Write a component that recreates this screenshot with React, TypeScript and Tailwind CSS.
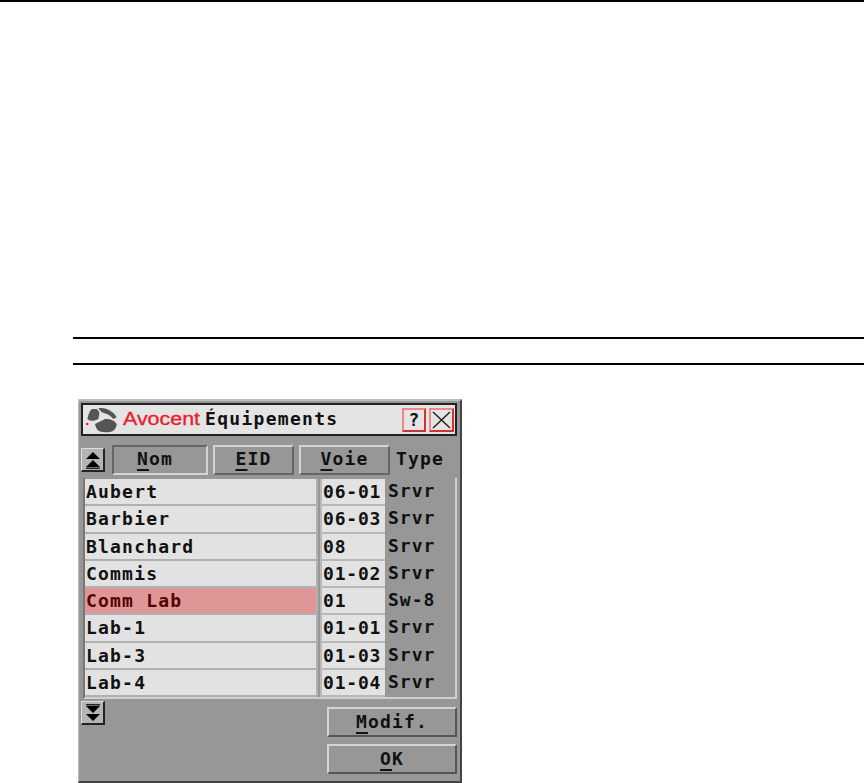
const mono = "font-['DejaVu_Sans_Mono','Liberation_Mono',monospace] font-bold";

const rows = [
  { name: 'Aubert', eid: '06-01', type: 'Srvr' },
  { name: 'Barbier', eid: '06-03', type: 'Srvr' },
  { name: 'Blanchard', eid: '08', type: 'Srvr' },
  { name: 'Commis', eid: '01-02', type: 'Srvr' },
  { name: 'Comm Lab', eid: '01', type: 'Sw-8', selected: true },
  { name: 'Lab-1', eid: '01-01', type: 'Srvr' },
  { name: 'Lab-3', eid: '01-03', type: 'Srvr' },
  { name: 'Lab-4', eid: '01-04', type: 'Srvr' },
];

function Logo() {
  return (
    <svg width="34" height="26" viewBox="0 0 34 26" className="shrink-0">
      <path d="M1.5 12 C2 8 4 3 6 2 L10.5 2 C12.5 3 13.5 5 13.3 7 L12.3 12 C10 13.5 7 13.8 5.7 13.7 C4 13.6 2.5 13 1.5 12 Z" fill="#555" />
      <path d="M12.3 1.3 C15 0.8 18 1 20.7 2 C25 3.5 29 7 30.7 10.3 L27.3 12 C25.5 9.5 23 8 20.7 7 L15.7 5.3 Z" fill="#555" />
      <path d="M9 17 L19 12 C22 12 24 12.3 25.7 13 C28 14 30 15.5 30.7 17 C30.5 20 29 22.5 27.3 23.7 C25 25 22 25.5 19 25.3 C16 25 14 24.5 12.3 23.7 C10.5 22 9.5 19.5 9 17 Z" fill="#555" />
      <circle cx="1.2" cy="17" r="1.3" fill="#e0202c" />
    </svg>
  );
}

function ArrowButton({ down }: { down?: boolean }) {
  return (
    <button className="w-6 h-6 bg-[#b4b4b4] border-t border-l border-[#dcdcdc] border-r-2 border-b-2 border-r-[#222] border-b-[#222] flex items-center justify-center">
      <svg width="16" height="18" viewBox="0 0 16 18" className={down ? 'rotate-180' : ''}>
        <path d="M8 1 L15 8 H1 Z M8 9 L15 16 H1 Z" fill="#000" />
        <path d="M1 17.2 H15" stroke="#000" strokeWidth="1.2" />
      </svg>
    </button>
  );
}

function Hotkey({ label }: { label: string }) {
  return (
    <>
      <span className="underline decoration-2 underline-offset-[4px] [text-decoration-skip-ink:none]">{label[0]}</span>
      {label.slice(1)}
    </>
  );
}

function ColumnButton({ label, width, pressed, shift }: { label: string; width: string; pressed?: boolean; shift?: string }) {
  return (
    <button
      className={`${width} ${shift ?? ''} h-[30px] flex items-center justify-center pb-[3px] text-[18px] tracking-[1.2px] text-[#111] border-2 ${
        pressed
          ? 'border-t-[#666] border-l-[#666] border-r-[#d4d4d4] border-b-[#d4d4d4]'
          : 'border-t-[#d4d4d4] border-l-[#d4d4d4] border-r-[#666] border-b-[#666]'
      }`}
    >
      <span>
        <Hotkey label={label} />
      </span>
    </button>
  );
}

function ActionButton({ label }: { label: string }) {
  return (
    <button className="w-[130px] h-[30px] flex items-center justify-center pb-[2px] text-[18px] tracking-[1.2px] text-[#111] border-2 border-t-[#d4d4d4] border-l-[#d4d4d4] border-r-[#555] border-b-[#555]">
      <span>
        <Hotkey label={label} />
      </span>
    </button>
  );
}

function Dialog() {
  return (
    <div className={`${mono} w-[384px] h-[384px] ml-[5px] mt-[34px] bg-[#979797] border-t-2 border-l border-[#bdbdbd] border-r-2 border-b-2 border-r-[#444] border-b-[#444] px-[2px] pt-[2px]`}>
      <div className="h-[33px] mr-[1px] bg-[#e4e4e4] border-2 border-[#222] flex items-center pl-[3px] pr-[1px]">
        <Logo />
        <span className="font-['Liberation_Sans',sans-serif] font-normal w-[79px] ml-[3px] text-[#e8202c] text-[18px] origin-left scale-x-[1.19] [-webkit-text-stroke:0.3px_#e8202c] whitespace-nowrap">Avocent</span>
        <span className="text-[18px] tracking-[1.3px] text-[#111] ml-[3px] pb-[2px]">Équipements</span>
        <div className="ml-auto flex items-center gap-[3px]">
          <span className="w-[24px] h-[24px] border-2 border-t-[#e88] border-l-[#e88] border-r-[#c33] border-b-[#c33] flex items-center justify-center text-[18px] text-[#111]">?</span>
          <span className="w-[25px] h-[24px] border-2 border-t-[#e88] border-l-[#e88] border-r-[#c33] border-b-[#c33] flex items-center justify-center">
            <svg width="19" height="18" viewBox="0 0 19 18">
              <path d="M1 1 L18 17 M18 1 L1 17" stroke="#222" strokeWidth="1.5" fill="none" />
            </svg>
          </span>
        </div>
      </div>

      <div className="flex items-center mt-[9px] h-[30px]">
        <ArrowButton />
        <div className="ml-[7px] flex gap-[5px]">
          <ColumnButton label="Nom" width="w-[96px]" pressed shift="pr-[10px]" />
          <ColumnButton label="EID" width="w-[81px]" />
          <ColumnButton label="Voie" width="w-[91px]" />
        </div>
        <span className="ml-[6px] pb-[3px] text-[18px] tracking-[1.2px] text-[#111]">Type</span>
      </div>

      <div className="mt-[3px] ml-[2px] w-[374px] border-r-2 border-b-2 border-[#cfcfcf] border-l-2 border-l-[#777] pt-[1px]">
        {rows.map((row) => (
          <div key={row.name} className="flex h-[27.25px] text-[18px] tracking-[1.2px] text-[#111]">
            <div className={`w-[233px] flex items-center pl-[1px] border-b-2 border-[#b0b0b0] border-r-2 ${row.selected ? 'bg-[#e09696] text-[#500]' : 'bg-[#e2e2e2]'}`}>
              {row.name}
            </div>
            <div className="w-[65px] ml-[2px] flex items-center pl-[1px] bg-[#e2e2e2] border-b-2 border-l-2 border-[#b8b8b8] tracking-[0.8px] whitespace-nowrap">
              {row.eid}
            </div>
            <div className="ml-[3px] pb-[4px] flex items-center bg-[#979797] tracking-[1px]">{row.type}</div>
          </div>
        ))}
      </div>

      <div className="flex justify-between mt-[2px]">
        <ArrowButton down />
        <div className="flex flex-col gap-[7px] mt-[6px] mr-[1px]">
          <ActionButton label="Modif." />
          <ActionButton label="OK" />
        </div>
      </div>
    </div>
  );
}

export default function App() {
  return (
    <div className="w-[864px] h-[783px] bg-white overflow-hidden">
      <div className="h-[2px] bg-black" />
      <div className="mt-[335px] ml-[73px]">
        <div className="h-[2px] bg-black" />
        <div className="h-[24px]" />
        <div className="h-[2px] bg-black" />
        <Dialog />
      </div>
    </div>
  );
}
